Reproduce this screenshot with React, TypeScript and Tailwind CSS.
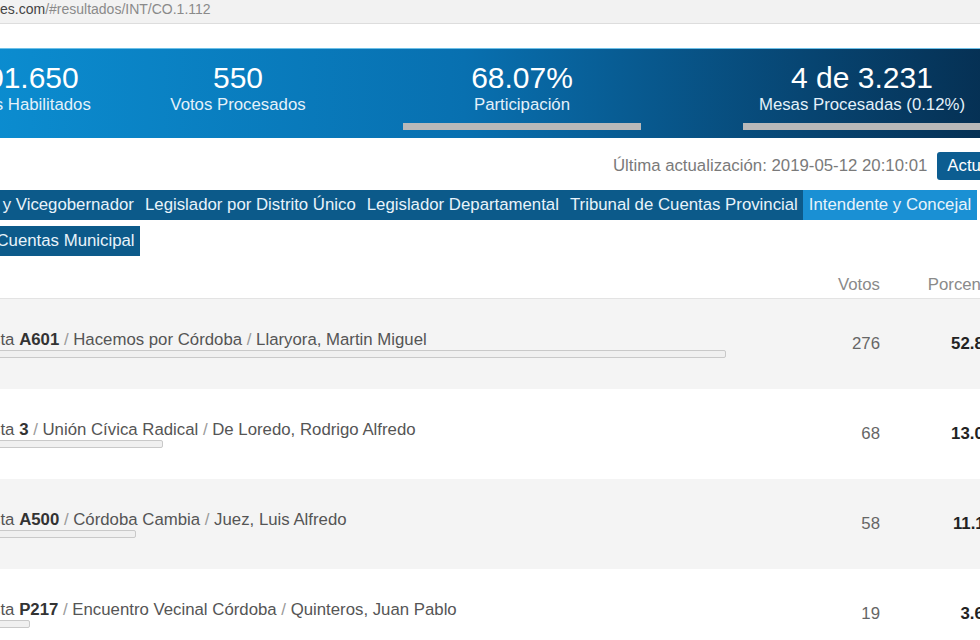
const stats = [
  { value: '1.001.650', label: 'Electores Habilitados', width: 'w-[226px]', bar: false },
  { value: '550', label: 'Votos Procesados', width: 'w-[226px]', bar: false },
  { value: '68.07%', label: 'Participación', width: 'w-[342px]', bar: true },
  { value: '4 de 3.231', label: 'Mesas Procesadas (0.12%)', width: 'w-[338px]', bar: true },
];

const tabs = [
  'Gobernador y Vicegobernador',
  'Legislador por Distrito Único',
  'Legislador Departamental',
  'Tribunal de Cuentas Provincial',
  'Intendente y Concejal',
  'Tribunal de Cuentas Municipal',
];

const rows = [
  { lista: 'A601', partido: 'Hacemos por Córdoba', candidato: 'Llaryora, Martin Miguel', votos: 276, pct: 52.87 },
  { lista: '3', partido: 'Unión Cívica Radical', candidato: 'De Loredo, Rodrigo Alfredo', votos: 68, pct: 13.03 },
  { lista: 'A500', partido: 'Córdoba Cambia', candidato: 'Juez, Luis Alfredo', votos: 58, pct: 11.11 },
  { lista: 'P217', partido: 'Encuentro Vecinal Córdoba', candidato: 'Quinteros, Juan Pablo', votos: 19, pct: 3.64 },
];

export default function App() {
  const activeTab = 'Intendente y Concejal';

  return (
    <div className="w-[980px] h-[640px] overflow-hidden bg-white font-['Liberation_Sans',Arial,sans-serif]">
      {/* address bar */}
      <div className="h-[24px] bg-[#f2f2f2] border-b border-[#dddddd] flex items-start">
        <div className="pt-[1px] text-[14px] leading-[17px] text-[#8a8a8a]">
          <span className="text-[#444]">es.com</span>/#resultados/INT/CO.1.112
        </div>
      </div>
      <div className="h-[24px] bg-white" />

      <div className="ml-[-101px] w-[1132px]">
        {/* summary banner */}
        <div className="h-[90px] border-t border-[#6cc0e8] bg-gradient-to-r from-[#0c92d6] via-[#0870b0] to-[#052b4c] flex text-white">
          {stats.map((s) => (
            <div key={s.label} className={`${s.width} flex flex-col items-center pt-[12px]`}>
              <div className="text-[30px] leading-[34px]">{s.value}</div>
              <div className="text-[16.8px] leading-[20px] text-[#e4f1fa]">{s.label}</div>
              {s.bar && <div className="mt-[8px] h-[7px] w-[238px] bg-[#b9b9b9]" />}
            </div>
          ))}
        </div>

        {/* last update */}
        <div className="mt-[14px] h-[28px] flex items-center justify-end gap-[10px]">
          <span className="text-[16.8px] text-[#7a7a7a]">Última actualización: 2019-05-12 20:10:01</span>
          <button className="h-[28px] px-[10px] rounded-[3px] bg-[#0c5d91] text-white text-[16.8px]">
            Actualizar
          </button>
        </div>

        {/* category tabs */}
        <div className="mt-[10px] ml-[4px] flex flex-wrap gap-y-[6px]">
          {tabs.map((t) => (
            <div
              key={t}
              className={`px-[5.5px] py-[5px] text-[16.8px] leading-[20px] text-[#e8f3fa] ${
                t === activeTab ? 'bg-[#1a90d4]' : 'bg-[#0c5a8a]'
              }`}
            >
              {t}
            </div>
          ))}
        </div>

        {/* results table */}
        <div className="mt-[15px]">
          <div className="h-[28px] flex items-center border-b border-[#e3e3e3] text-[16.8px] text-[#8a8a8a] pr-[23px]">
            <div className="flex-1" />
            <div className="w-[100px] text-right">Votos</div>
            <div className="w-[128px] text-right">Porcentaje</div>
          </div>
          {rows.map((r, i) => (
            <div
              key={r.lista}
              className={`h-[90px] flex items-center pr-[23px] ${i % 2 === 0 ? 'bg-[#f4f4f4]' : 'bg-white'}`}
            >
              <div className="flex-1 pl-[80px]">
                <div className="text-[16.8px] leading-[20px] text-[#555]">
                  Lista <b className="text-[#333]">{r.lista}</b>
                  <span className="text-[#999]"> / </span>
                  {r.partido}
                  <span className="text-[#999]"> / </span>
                  {r.candidato}
                </div>
                <div
                  className="h-[8px] border border-[#c9c9c9] rounded-[2px] bg-[#f0f0f0]"
                  style={{ width: `${r.pct * 14.13}px` }}
                />
              </div>
              <div className="w-[100px] text-right text-[16.8px] text-[#666]">{r.votos}</div>
              <div className="w-[128px] text-right text-[16.8px] font-bold text-[#222]">
                {r.pct.toFixed(2)}%
              </div>
            </div>
          ))}
        </div>
      </div>
    </div>
  );
}
